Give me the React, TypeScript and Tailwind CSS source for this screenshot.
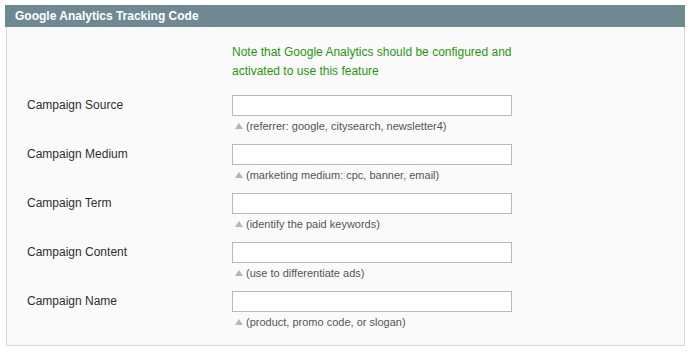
const rows = [
  { label: "Campaign Source", hint: "(referrer: google, citysearch, newsletter4)" },
  { label: "Campaign Medium", hint: "(marketing medium: cpc, banner, email)" },
  { label: "Campaign Term", hint: "(identify the paid keywords)" },
  { label: "Campaign Content", hint: "(use to differentiate ads)" },
  { label: "Campaign Name", hint: "(product, promo code, or slogan)" },
];

export default function App() {
  return (
    <div className="min-h-screen bg-white pt-[5px] pl-[5px] font-['Liberation_Sans',Arial,sans-serif]">
      <div className="w-[680px]">
        <div className="h-[22px] bg-[#6f8992] pl-[10px] text-[12px] font-bold leading-[22px] text-white">
          Google Analytics Tracking Code
        </div>
        <div className="ml-[1px] border-x border-b border-[#d6d6d6] bg-[#fafafa] pt-[16px] pb-[5px]">
          <p className="ml-[225px] text-[12px] leading-[19px] text-[#1e9b0a]">
            Note that Google Analytics should be configured and
            <br />
            activated to use this feature
          </p>
          <div className="mt-[14px] flex flex-col">
            {rows.map((r) => (
              <div key={r.label} className="flex h-[49px]">
                <div className="w-[225px] shrink-0 pl-[20px] text-[12px] leading-[21px] text-[#2f2f2f]">{r.label}</div>
                <div className="flex flex-col">
                  <input type="text" className="h-[21px] w-[280px] border border-[#b9b9b9] bg-white" />
                  <div className="mt-[3px] flex items-center pl-[3px] text-[11px] leading-[14px] text-[#555]">
                    <span className="mr-[3px] inline-block h-0 w-0 border-x-[4px] border-b-[6px] border-x-transparent border-b-[#b5b5b5]" />
                    {r.hint}
                  </div>
                </div>
              </div>
            ))}
          </div>
        </div>
      </div>
    </div>
  );
}
